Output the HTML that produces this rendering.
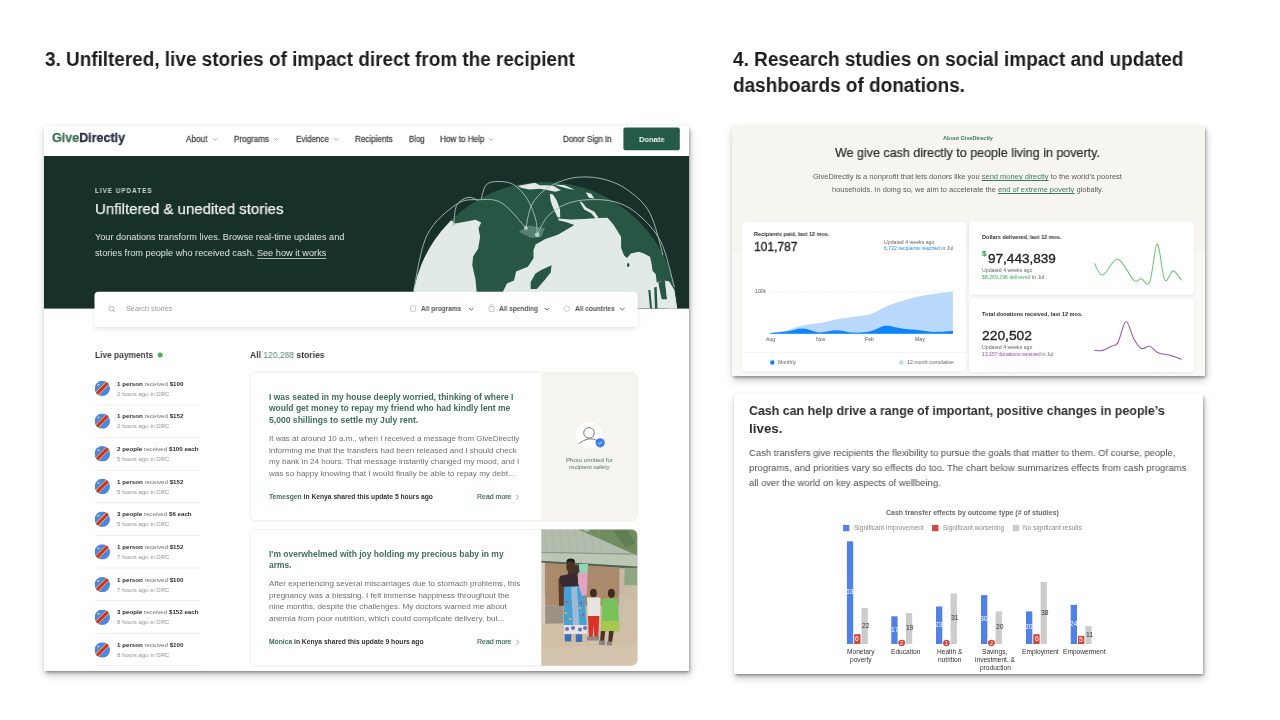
<!DOCTYPE html>
<html><head><meta charset="utf-8"><style>
html,body{margin:0;padding:0;width:1280px;height:720px;overflow:hidden;background:#fff;}
body{position:relative;font-family:"Liberation Sans",sans-serif;}
.t{position:absolute;white-space:nowrap;transform-origin:0 0;will-change:transform;}
.shot{position:absolute;background:#fff;}
svg.g{position:absolute;left:0;top:0;}
</style></head><body>

<div class="shot" style="left:44px;top:126px;width:645px;height:545px;box-shadow:0.5px 1.5px 3px rgba(0,0,0,0.38), 1px 4px 8px rgba(0,0,0,0.22);"></div>
<div class="shot" style="left:732px;top:126px;width:473px;height:250px;box-shadow:0.5px 1.5px 3px rgba(0,0,0,0.38), 1px 4px 8px rgba(0,0,0,0.22);"></div>
<div class="shot" style="left:734px;top:394px;width:469px;height:280px;box-shadow:0.5px 1.5px 3px rgba(0,0,0,0.38), 1px 4px 8px rgba(0,0,0,0.22);"></div>

<svg class="g" width="1280" height="720" viewBox="0 0 1280 720">
<rect x="44" y="126" width="645" height="30" fill="#fff"/><polyline points="212.8,138.20000000000002 215,140.4 217.2,138.20000000000002" fill="none" stroke="#9a9a9a" stroke-width="0.8"/><polyline points="274.3,138.20000000000002 276.5,140.4 278.7,138.20000000000002" fill="none" stroke="#9a9a9a" stroke-width="0.8"/><polyline points="334.3,138.20000000000002 336.5,140.4 338.7,138.20000000000002" fill="none" stroke="#9a9a9a" stroke-width="0.8"/><polyline points="488.8,138.20000000000002 491,140.4 493.2,138.20000000000002" fill="none" stroke="#9a9a9a" stroke-width="0.8"/><rect x="623.4" y="127.6" width="56.4" height="22.6" rx="2" fill="#245a47"/><rect x="44" y="156" width="645" height="152.6" fill="#17302a"/><defs><clipPath id="heroclip"><rect x="44" y="156" width="645" height="152.6"/></clipPath><clipPath id="globeclip"><circle cx="544.5" cy="315.0" r="133.0"/></clipPath></defs><g clip-path="url(#heroclip)"><circle cx="544.5" cy="315.0" r="133.0" fill="#275744"/><g clip-path="url(#globeclip)"><polygon points="389.4,306.1 389.4,199.2 452.6,220.9 454.0,223.7 469.2,220.9 475.4,219.8 481.2,222.5 478.5,228.3 480.1,237.1 478.1,248.7 473.1,256.5 472.3,265.3 475.4,278.9 478.1,306.1" fill="#e2eae7"/><polygon points="502.9,300.0 502.9,291.7 507.1,283.3 514.0,280.6 516.1,271.5 527.9,266.7 533.5,258.3 533.5,250.0 535.6,244.4 545.3,238.9 557.8,234.7 574.4,225.0 565.7,222.1 558.9,220.6 557.9,218.6 570.6,219.4 584.2,219.0 597.8,217.9 607.5,217.7 613.4,224.5 618.2,232.2 621.1,237.1 621.1,247.8 624.1,255.6 627.0,257.9 630.9,253.6 638.7,251.7 643.3,253.3 650.0,256.7 651.7,264.2 652.5,270.8 655.8,274.2 656.7,282.5 658.3,281.7 665.0,280.8 669.2,281.7 674.2,290.0 679.0,320.0" fill="#e2eae7"/><polygon points="530.7,288.9 530.7,281.9 535.6,273.6 541.1,270.1 551.5,265.3 550.8,272.2 545.3,279.2 536.9,288.9" fill="#275744"/><ellipse cx="628.2" cy="264.9" rx="1.3" ry="2" fill="#275744"/><polygon points="549.8,193.8 553.0,194.5 556.9,200.8 560.0,209.4 560.2,217.2 557.7,217.6 553.0,207.8 550.6,200.8" fill="#e2eae7"/><polygon points="553.8,184.4 564.7,185.2 574.8,189.8 569.4,189.1 558.4,185.9" fill="#e2eae7"/><polygon points="517.8,185.9 525.6,184.4 535.0,182.8 539.7,185.2 546.7,185.2 553.8,185.9 560.8,190.2 555.3,191.8 545.9,189.8 539.7,188.7 529.5,189.5 521.7,187.9" fill="#e2eae7"/><polygon points="585.8,192.2 591.2,193.8 594.4,198.4 588.9,197.7" fill="#e2eae7"/><polygon points="579.5,201.6 581.9,202.3 586.6,207.8 594.4,211.7 598.3,217.2 595.9,218.8 591.2,213.3 584.2,209.4" fill="#e2eae7"/><polygon points="648.3,290.0 650.4,290.0 652.1,309.0 650.0,309.0" fill="#275744"/><polygon points="654.2,287.5 656.7,286.7 657.5,309.0 655.0,309.0" fill="#275744"/><polygon points="658.3,281.7 665.0,280.8 667.1,299.2 661.7,299.2 659.2,287.5" fill="#275744"/><polygon points="665.0,280.8 669.2,281.7 674.2,290.0 677.5,312.0 667.5,312.0 667.1,299.2" fill="#e2eae7"/><polygon points="518.7,231.8 529.4,225.4 545.0,228.3 541.1,237.1 531.4,238.1" fill="#7fa394" opacity="0.55"/></g><path d="M413.6,290.4 C415.9,281.1 420.0,249.2 427.2,234.8 C434.4,220.5 448.0,210.1 456.7,204.2 C465.4,198.4 471.8,199.9 479.4,199.7 C486.9,199.5 494.3,198.4 502.0,203.1 C509.8,207.8 521.9,223.9 525.9,228.0" fill="none" stroke="#a9c4b9" stroke-width="0.95" opacity="0.95"/><path d="M453.7,224.6 C454.2,221.4 454.3,209.9 456.7,205.4 C459.1,200.8 464.4,198.2 468.0,197.4 C471.6,196.6 476.5,199.9 478.2,200.4" fill="none" stroke="#a9c4b9" stroke-width="0.95" opacity="0.95"/><path d="M481.2,199.0 C482.0,196.7 483.4,187.9 486.2,184.9 C488.9,182.0 493.0,181.6 497.5,181.5 C502.0,181.5 508.5,181.7 513.4,184.5 C518.3,187.3 523.3,192.8 527.0,198.5 C530.7,204.3 533.9,212.9 535.6,219.0 C537.3,225.0 536.9,232.2 537.2,234.8" fill="none" stroke="#a9c4b9" stroke-width="0.95" opacity="0.95"/><path d="M525.9,228.0 C526.8,224.2 528.3,211.8 531.5,205.4 C534.7,198.9 539.8,193.6 545.1,189.5 C550.4,185.3 557.2,182.5 563.3,180.4 C569.3,178.3 574.6,177.2 581.4,177.0 C588.2,176.8 596.5,177.2 604.1,179.3 C611.6,181.4 619.2,184.0 626.8,189.5 C634.3,195.0 643.4,201.2 649.4,212.2 C655.5,223.1 660.8,248.1 663.0,255.2" fill="none" stroke="#a9c4b9" stroke-width="0.95" opacity="0.95"/><path d="M537.2,234.8 C538.9,231.8 542.7,221.8 547.4,216.7 C552.1,211.6 558.7,207.1 565.5,204.2 C572.3,201.4 579.9,200.1 588.2,199.7 C596.5,199.3 607.1,199.5 615.4,202.0 C623.7,204.4 630.5,207.8 638.1,214.4 C645.7,221.0 654.7,229.5 660.8,241.6 C666.8,253.7 672.1,279.4 674.4,287.0" fill="none" stroke="#a9c4b9" stroke-width="0.95" opacity="0.95"/><circle cx="525.9" cy="228.0" r="1.9" fill="#b9cfc6"/><circle cx="537.2" cy="234.8" r="2.3" fill="#b9cfc6"/><circle cx="453.7" cy="224.6" r="1.5" fill="#b9cfc6"/></g><defs><filter id="sbsh" x="-10%" y="-50%" width="120%" height="200%"><feDropShadow dx="0" dy="2" stdDeviation="2.5" flood-color="#000" flood-opacity="0.10"/></filter></defs><rect x="94.5" y="291.7" width="543.1" height="35.2" rx="4" fill="#fff" filter="url(#sbsh)"/><circle cx="111.4" cy="308.6" r="2.4" fill="none" stroke="#9a9a9a" stroke-width="0.7"/><line x1="113.2" y1="310.4" x2="114.8" y2="312" stroke="#9a9a9a" stroke-width="0.7"/><polyline points="468.9,307.85 471.2,310.15 473.5,307.85" fill="none" stroke="#555" stroke-width="0.9"/><polyline points="544.5,307.85 546.8,310.15 549.0999999999999,307.85" fill="none" stroke="#555" stroke-width="0.9"/><polyline points="620.0,307.85 622.3,310.15 624.5999999999999,307.85" fill="none" stroke="#555" stroke-width="0.9"/><rect x="410.5" y="305.8" width="5.2" height="5.6" rx="1.2" fill="none" stroke="#aaa" stroke-width="0.6"/><rect x="489" y="306.5" width="5.2" height="5" rx="0.8" fill="none" stroke="#aaa" stroke-width="0.6"/><path d="M490.3,306.5 v-1 a1.3,1.3 0 0 1 2.6,0 v1" fill="none" stroke="#aaa" stroke-width="0.6"/><circle cx="566.7" cy="308.7" r="2.8" fill="none" stroke="#aaa" stroke-width="0.6"/><circle cx="160.1" cy="355.1" r="2.5" fill="#4caf50"/><defs><clipPath id="fl388"><circle cx="102.3" cy="388.4" r="7.7"/></clipPath></defs><g clip-path="url(#fl388)"><rect x="94.6" y="380.7" width="15.4" height="15.4" fill="#4a86e6"/><line x1="94.6" y1="396.09999999999997" x2="110.0" y2="380.7" stroke="#f2d84a" stroke-width="4.2"/><line x1="94.6" y1="396.09999999999997" x2="110.0" y2="380.7" stroke="#d42b2b" stroke-width="3.0"/><circle cx="98.5" cy="384.9" r="1.0" fill="#efd95a"/></g><rect x="94.5" y="404.7" width="106" height="0.6" fill="#e6e6e6"/><defs><clipPath id="fl421"><circle cx="102.3" cy="421.09999999999997" r="7.7"/></clipPath></defs><g clip-path="url(#fl421)"><rect x="94.6" y="413.4" width="15.4" height="15.4" fill="#4a86e6"/><line x1="94.6" y1="428.79999999999995" x2="110.0" y2="413.4" stroke="#f2d84a" stroke-width="4.2"/><line x1="94.6" y1="428.79999999999995" x2="110.0" y2="413.4" stroke="#d42b2b" stroke-width="3.0"/><circle cx="98.5" cy="417.59999999999997" r="1.0" fill="#efd95a"/></g><rect x="94.5" y="437.3" width="106" height="0.6" fill="#e6e6e6"/><defs><clipPath id="fl453"><circle cx="102.3" cy="453.79999999999995" r="7.7"/></clipPath></defs><g clip-path="url(#fl453)"><rect x="94.6" y="446.09999999999997" width="15.4" height="15.4" fill="#4a86e6"/><line x1="94.6" y1="461.49999999999994" x2="110.0" y2="446.09999999999997" stroke="#f2d84a" stroke-width="4.2"/><line x1="94.6" y1="461.49999999999994" x2="110.0" y2="446.09999999999997" stroke="#d42b2b" stroke-width="3.0"/><circle cx="98.5" cy="450.29999999999995" r="1.0" fill="#efd95a"/></g><rect x="94.5" y="469.9" width="106" height="0.6" fill="#e6e6e6"/><defs><clipPath id="fl486"><circle cx="102.3" cy="486.5" r="7.7"/></clipPath></defs><g clip-path="url(#fl486)"><rect x="94.6" y="478.8" width="15.4" height="15.4" fill="#4a86e6"/><line x1="94.6" y1="494.2" x2="110.0" y2="478.8" stroke="#f2d84a" stroke-width="4.2"/><line x1="94.6" y1="494.2" x2="110.0" y2="478.8" stroke="#d42b2b" stroke-width="3.0"/><circle cx="98.5" cy="483.0" r="1.0" fill="#efd95a"/></g><rect x="94.5" y="502.5" width="106" height="0.6" fill="#e6e6e6"/><defs><clipPath id="fl519"><circle cx="102.3" cy="519.2" r="7.7"/></clipPath></defs><g clip-path="url(#fl519)"><rect x="94.6" y="511.50000000000006" width="15.4" height="15.4" fill="#4a86e6"/><line x1="94.6" y1="526.9000000000001" x2="110.0" y2="511.50000000000006" stroke="#f2d84a" stroke-width="4.2"/><line x1="94.6" y1="526.9000000000001" x2="110.0" y2="511.50000000000006" stroke="#d42b2b" stroke-width="3.0"/><circle cx="98.5" cy="515.7" r="1.0" fill="#efd95a"/></g><rect x="94.5" y="535.1" width="106" height="0.6" fill="#e6e6e6"/><defs><clipPath id="fl551"><circle cx="102.3" cy="551.9" r="7.7"/></clipPath></defs><g clip-path="url(#fl551)"><rect x="94.6" y="544.1999999999999" width="15.4" height="15.4" fill="#4a86e6"/><line x1="94.6" y1="559.6" x2="110.0" y2="544.1999999999999" stroke="#f2d84a" stroke-width="4.2"/><line x1="94.6" y1="559.6" x2="110.0" y2="544.1999999999999" stroke="#d42b2b" stroke-width="3.0"/><circle cx="98.5" cy="548.4" r="1.0" fill="#efd95a"/></g><rect x="94.5" y="567.7" width="106" height="0.6" fill="#e6e6e6"/><defs><clipPath id="fl584"><circle cx="102.3" cy="584.6" r="7.7"/></clipPath></defs><g clip-path="url(#fl584)"><rect x="94.6" y="576.9" width="15.4" height="15.4" fill="#4a86e6"/><line x1="94.6" y1="592.3000000000001" x2="110.0" y2="576.9" stroke="#f2d84a" stroke-width="4.2"/><line x1="94.6" y1="592.3000000000001" x2="110.0" y2="576.9" stroke="#d42b2b" stroke-width="3.0"/><circle cx="98.5" cy="581.1" r="1.0" fill="#efd95a"/></g><rect x="94.5" y="600.3" width="106" height="0.6" fill="#e6e6e6"/><defs><clipPath id="fl617"><circle cx="102.3" cy="617.3" r="7.7"/></clipPath></defs><g clip-path="url(#fl617)"><rect x="94.6" y="609.5999999999999" width="15.4" height="15.4" fill="#4a86e6"/><line x1="94.6" y1="625.0" x2="110.0" y2="609.5999999999999" stroke="#f2d84a" stroke-width="4.2"/><line x1="94.6" y1="625.0" x2="110.0" y2="609.5999999999999" stroke="#d42b2b" stroke-width="3.0"/><circle cx="98.5" cy="613.8" r="1.0" fill="#efd95a"/></g><rect x="94.5" y="632.9" width="106" height="0.6" fill="#e6e6e6"/><defs><clipPath id="fl650"><circle cx="102.3" cy="650.0" r="7.7"/></clipPath></defs><g clip-path="url(#fl650)"><rect x="94.6" y="642.3" width="15.4" height="15.4" fill="#4a86e6"/><line x1="94.6" y1="657.7" x2="110.0" y2="642.3" stroke="#f2d84a" stroke-width="4.2"/><line x1="94.6" y1="657.7" x2="110.0" y2="642.3" stroke="#d42b2b" stroke-width="3.0"/><circle cx="98.5" cy="646.5" r="1.0" fill="#efd95a"/></g><rect x="94.5" y="665.5" width="106" height="0.6" fill="#e6e6e6"/><rect x="249.8" y="372.2" width="387.6" height="148.8" rx="6" fill="#fff" stroke="#e9e9e9" stroke-width="0.8"/><rect x="249.8" y="529.4" width="387.6" height="136.39999999999998" rx="6" fill="#fff" stroke="#e9e9e9" stroke-width="0.8"/><defs><clipPath id="c1img"><path d="M540.8,372.2 H631.4 A6,6 0 0 1 637.4,378.2 V515 A6,6 0 0 1 631.4,521 H540.8 Z"/></clipPath></defs><rect x="540.8" y="372.2" width="97" height="149" fill="#f5f4ef" clip-path="url(#c1img)"/><polyline points="516.3,494.8 518.6,497.3 516.3,499.8" fill="none" stroke="#5b8a76" stroke-width="0.7"/><circle cx="589.1" cy="435.2" r="13.2" fill="#fff"/><circle cx="589" cy="432.9" r="5.3" fill="none" stroke="#6a6a6a" stroke-width="0.9"/><path d="M578.6,443.8 Q589,435.5 597.5,440.8" fill="none" stroke="#6a6a6a" stroke-width="0.9"/><circle cx="600.2" cy="442.8" r="4.6" fill="#3b7cf0"/><polyline points="598.2,442.9 599.6,444.2 602.2,441.4" fill="none" stroke="#fff" stroke-width="0.8"/><polyline points="516.5,639.8 518.8,642.3 516.5,644.8" fill="none" stroke="#5b8a76" stroke-width="0.7"/><defs><clipPath id="ph"><path d="M541.3,529.4 H631.4 A6,6 0 0 1 637.4,535.4 V659.8 A6,6 0 0 1 631.4,665.8 H541.3 Z"/></clipPath><filter id="blur1" x="-5%" y="-5%" width="110%" height="110%"><feGaussianBlur stdDeviation="0.6"/></filter></defs><g clip-path="url(#ph)"><g filter="url(#blur1)"><rect x="538" y="526" width="102" height="143" fill="#cfbea8"/><polygon points="540.0,528.0 637.2,528.0 637.2,568.8 540.0,568.8" fill="#6f8c60" /><polygon points="582.8,528.0 590.5,528.0 588.6,531.9 584.7,531.4" fill="#a9b8a4" /><polygon points="613.9,530.9 627.5,529.9 635.2,543.5 625.5,547.4" fill="#5f7f52" /><polygon points="540.0,528.0 575.0,528.0 633.8,554.0 540.0,552.5" fill="#b2bdae" /><line x1="543.9" y1="528.5" x2="546.8" y2="552.3" stroke="#9faa9c" stroke-width="0.4"/><line x1="551.7" y1="528.5" x2="554.6" y2="552.3" stroke="#9faa9c" stroke-width="0.4"/><line x1="559.4" y1="528.5" x2="562.4" y2="552.3" stroke="#9faa9c" stroke-width="0.4"/><line x1="567.2" y1="528.5" x2="570.1" y2="552.3" stroke="#9faa9c" stroke-width="0.4"/><line x1="575.0" y1="528.5" x2="577.9" y2="552.3" stroke="#9faa9c" stroke-width="0.4"/><line x1="582.8" y1="528.5" x2="585.7" y2="552.3" stroke="#9faa9c" stroke-width="0.4"/><line x1="590.5" y1="528.5" x2="593.4" y2="552.3" stroke="#9faa9c" stroke-width="0.4"/><line x1="598.3" y1="528.5" x2="601.2" y2="552.3" stroke="#9faa9c" stroke-width="0.4"/><polygon points="540.0,552.3 633.8,554.0 637.2,555.7 637.2,567.4 540.0,561.8" fill="#bcc6b5" /><polygon points="540.0,551.8 633.8,553.5 633.8,554.7 540.0,553.1" fill="#8e9a8a" /><polygon points="540.0,560.8 637.2,566.4 637.2,568.6 540.0,563.0" fill="#4e5e54" /><polygon points="540.0,562.5 619.7,567.4 619.2,605.7 540.0,605.7" fill="#a98a6b" /><polygon points="540.0,562.5 544.9,562.8 544.9,605.7 540.0,605.7" fill="#d2cbc0" /><polygon points="573.0,564.9 582.8,565.4 582.8,573.7 573.0,573.7" fill="#3e3632" /><polygon points="623.6,567.8 637.2,567.8 637.2,586.3 623.6,586.3" fill="#8fa682" /><polygon points="623.6,585.3 637.2,585.3 637.2,598.0 623.6,598.0" fill="#cdbca5" /><polygon points="545.0,606.0 563.5,606.0 563.5,624.5 545.0,624.5" fill="#9c9184" /><polygon points="541.5,595.0 545.2,595.0 545.2,625.0 541.5,625.0" fill="#d3ccc1" /><polygon points="540.0,624.0 640.0,621.0 640.0,668.0 540.0,668.0" fill="#d0bea7" /><polygon points="540.0,648.0 640.0,644.0 640.0,668.0 540.0,668.0" fill="#d4c3ad" /><polygon points="619.7,568.3 624.7,568.3 623.8,598.0 619.9,598.0" fill="#c6b9a6" /><polygon points="618.8,595.5 623.0,595.5 621.5,629.0 618.6,629.0" fill="#c9bdae" /><ellipse cx="570.7" cy="561.8" rx="4.2" ry="3.2" fill="#1f1a18"/><ellipse cx="570.6" cy="566.7" rx="4.4" ry="5.4" fill="#4b3223"/><polygon points="567.7,570.8 574.0,570.8 573.5,574.6 568.2,574.6" fill="#4b3223" /><polygon points="558.5,578.5 563.8,576.6 563.8,605.7 559.0,605.7" fill="#5a3a2a" /><polygon points="559.9,576.1 576.9,572.2 578.9,586.3 564.3,588.1 559.4,582.4" fill="#372a30" /><polygon points="564.1,586.8 583.9,586.1 587.2,633.0 564.0,633.0" fill="#45a0d6" /><polygon points="571.1,587.3 576.9,586.8 579.5,626.0 573.0,626.0" fill="#e6d2d8" opacity="0.55"/><circle cx="567.0" cy="602.0" r="1.3" fill="#d44a5a" opacity="0.8"/><circle cx="581.0" cy="603.0" r="1.3" fill="#d44a5a" opacity="0.8"/><circle cx="566.0" cy="613.0" r="1.3" fill="#e0c040" opacity="0.8"/><circle cx="583.0" cy="615.0" r="1.3" fill="#d44a5a" opacity="0.8"/><circle cx="570.0" cy="619.0" r="1.3" fill="#e0c040" opacity="0.8"/><circle cx="580.0" cy="608.0" r="1.3" fill="#e0c040" opacity="0.8"/><polygon points="564.0,625.0 587.2,625.0 587.2,633.8 564.0,633.8" fill="#e9e2e8" /><circle cx="567.0" cy="629.0" r="2" fill="#3c4fa0" opacity="0.75"/><circle cx="573.0" cy="628.0" r="2" fill="#3c4fa0" opacity="0.75"/><circle cx="580.0" cy="629.5" r="2" fill="#3c4fa0" opacity="0.75"/><circle cx="585.0" cy="628.0" r="2" fill="#3c4fa0" opacity="0.75"/><polygon points="564.8,634.2 571.2,634.2 571.2,641.5 564.8,641.5" fill="#3b6fb8" /><polygon points="575.8,634.2 582.2,634.2 582.2,642.0 575.8,642.0" fill="#3b6fb8" /><polygon points="578.4,572.2 587.6,572.2 586.8,595.1 582.0,596.0 577.9,582.4" fill="#e2a4c4" /><polygon points="578.9,564.0 588.1,564.0 587.6,572.7 579.4,572.7" fill="#92d6b4" /><ellipse cx="593.4" cy="593.1" rx="3.4" ry="4.4" fill="#3f2a20"/><polygon points="587.0,597.5 600.5,597.5 600.0,616.5 588.0,616.5" fill="#e9e3dd" /><polygon points="588.0,616.0 599.2,616.0 598.2,637.2 594.5,637.2 593.5,624.5 592.7,637.2 589.0,637.2" fill="#d9302b" /><polygon points="587.0,636.5 599.0,636.5 599.0,640.5 587.0,640.5" fill="#8f8a88" /><ellipse cx="611.4" cy="593.3" rx="3.5" ry="4.5" fill="#3f2a20"/><polygon points="602.2,598.5 618.0,598.5 619.2,631.0 601.2,631.0" fill="#79c25a" /><polygon points="601.2,621.0 619.2,621.0 619.2,631.5 601.2,631.5" fill="#a6c84e" /><polygon points="600.8,631.0 605.2,631.0 604.0,643.0 600.0,643.0" fill="#4a3628" /><polygon points="609.0,631.0 613.8,631.0 611.8,644.0 608.0,644.0" fill="#4a3628" /><polygon points="599.0,640.5 605.0,640.5 605.0,645.0 599.0,645.0" fill="#8a8582" /><polygon points="606.8,641.5 612.0,641.5 612.0,645.5 606.8,645.5" fill="#8a8582" /></g></g><rect x="732" y="126" width="473" height="127" fill="#f6f5f0"/><rect x="732" y="253" width="473" height="123" fill="#f9f9f8"/><defs><filter id="cardsh" x="-5%" y="-5%" width="110%" height="115%"><feDropShadow dx="0" dy="0.6" stdDeviation="0.8" flood-color="#000" flood-opacity="0.10"/></filter></defs><rect x="741.8" y="222" width="224.2" height="149.5" rx="3.5" fill="#fff" filter="url(#cardsh)"/><rect x="969.1" y="221.6" width="225" height="73.1" rx="3.5" fill="#fff" filter="url(#cardsh)"/><rect x="969.1" y="298.4" width="225" height="73.6" rx="3.5" fill="#fff" filter="url(#cardsh)"/><line x1="770.9" y1="291.9" x2="952.9" y2="291.9" stroke="#cfcfcf" stroke-width="0.6" stroke-dasharray="1,2"/><path d="M770.2,333.3 C773.2,332.7 783.1,331.0 788.5,329.7 C794.0,328.3 797.5,326.3 802.9,325.2 C808.3,324.1 814.9,324.0 820.9,323.0 C826.9,322.0 831.3,320.3 838.8,319.1 C846.3,317.8 859.8,316.4 865.8,315.3 C871.8,314.1 871.2,313.8 874.8,312.2 C878.4,310.7 882.9,307.8 887.3,305.9 C891.8,304.1 896.3,302.5 901.7,300.9 C907.1,299.3 913.7,297.5 919.7,296.2 C925.7,295.0 932.1,294.2 937.7,293.4 C943.2,292.5 950.4,291.6 952.9,291.2 L952.9,333.8 L770.2,333.8 Z" fill="#bad8fb"/><path d="M770.2,332.9 C772.9,332.7 781.3,332.4 786.7,331.6 C792.2,330.9 797.5,328.5 802.9,328.6 C808.3,328.7 813.4,332.1 819.1,332.4 C824.8,332.6 831.6,330.2 837.0,330.2 C842.4,330.2 846.0,332.3 851.4,332.5 C856.8,332.8 863.7,332.8 869.4,331.6 C875.1,330.5 880.2,326.2 885.6,325.7 C890.9,325.2 896.0,327.7 901.7,328.4 C907.4,329.1 914.3,329.6 919.7,330.2 C925.1,330.8 928.5,331.8 934.1,332.0 C939.6,332.1 949.8,331.2 952.9,331.1 L952.9,333.8 L770.2,333.8 Z" fill="#0a84ff"/><rect x="741.8" y="352.2" width="224.2" height="0.5" fill="#ececec"/><circle cx="772.3" cy="362.5" r="2.2" fill="#0a84ff"/><circle cx="901.4" cy="362.5" r="2.2" fill="#bad8fb"/><path d="M1094.4,263.4 C1095.8,265.3 1098.9,275.7 1102.8,275.0 C1106.7,274.3 1112.7,258.2 1117.8,259.1 C1123.0,259.9 1129.9,277.0 1133.8,280.3 C1137.7,283.5 1138.6,278.4 1141.3,278.8 C1143.9,279.1 1147.0,287.9 1149.7,282.1 C1152.4,276.3 1154.7,244.5 1157.2,244.1 C1159.7,243.7 1162.0,275.2 1164.7,279.7 C1167.4,284.2 1170.3,270.8 1173.1,270.9 C1176.0,271.0 1180.2,278.7 1181.6,280.3" fill="none" stroke="#6cc77f" stroke-width="1.1"/><path d="M1094.4,350.4 C1095.8,350.4 1100.0,351.1 1102.8,350.4 C1105.6,349.7 1108.8,347.5 1111.3,346.3 C1113.8,345.0 1115.4,347.0 1117.8,342.9 C1120.3,338.8 1123.2,322.2 1125.9,321.5 C1128.5,320.8 1131.2,334.3 1133.8,338.8 C1136.3,343.3 1138.6,347.3 1141.3,348.5 C1143.9,349.8 1146.9,345.5 1149.7,346.3 C1152.5,347.0 1154.5,351.3 1158.1,352.8 C1161.7,354.4 1167.4,354.5 1171.3,355.6 C1175.2,356.7 1179.9,358.8 1181.6,359.4" fill="none" stroke="#9b59b6" stroke-width="1.1"/><rect x="843.1" y="524.9" width="6.3" height="6.3" fill="#4f81e8"/><rect x="932.1" y="524.9" width="6.3" height="6.3" fill="#d2473c"/><rect x="1012.8" y="524.9" width="6.3" height="6.3" fill="#cccccc"/><rect x="846.9" y="541.3" width="6.3" height="102.7" fill="#4f81e8"/><rect x="854.2" y="634.2" width="6.3" height="9.8" fill="#d2473c"/><rect x="861.5" y="608.1" width="6.3" height="35.9" fill="#cccccc"/><rect x="891.3" y="616.3" width="6.3" height="27.7" fill="#4f81e8"/><rect x="898.6" y="640.7" width="6.3" height="3.3" fill="#d2473c"/><rect x="905.9" y="613.0" width="6.3" height="31.0" fill="#cccccc"/><circle cx="901.7" cy="643.0" r="3.2" fill="#d2473c"/><rect x="936.0" y="606.5" width="6.3" height="37.5" fill="#4f81e8"/><rect x="943.3" y="642.4" width="6.3" height="1.6" fill="#d2473c"/><rect x="950.6" y="593.5" width="6.3" height="50.5" fill="#cccccc"/><circle cx="946.4" cy="643.0" r="3.2" fill="#d2473c"/><rect x="981.0" y="595.1" width="6.3" height="48.9" fill="#4f81e8"/><rect x="988.3" y="640.7" width="6.3" height="3.3" fill="#d2473c"/><rect x="995.6" y="611.4" width="6.3" height="32.6" fill="#cccccc"/><circle cx="991.4" cy="643.0" r="3.2" fill="#d2473c"/><rect x="1026.0" y="611.4" width="6.3" height="32.6" fill="#4f81e8"/><rect x="1033.3" y="634.2" width="6.3" height="9.8" fill="#d2473c"/><rect x="1040.6" y="582.1" width="6.3" height="61.9" fill="#cccccc"/><rect x="1070.7" y="604.9" width="6.3" height="39.1" fill="#4f81e8"/><rect x="1078.0" y="635.9" width="6.3" height="8.1" fill="#d2473c"/><rect x="1085.3" y="626.1" width="6.3" height="17.9" fill="#cccccc"/>
</svg>
<div class="t" style="left:45.00px;top:50.21px;font-size:19.6px;line-height:19.6px;transform:scaleX(0.9655);"><span style="font-weight:700;color:#1d1d1d;">3. Unfiltered, live stories of impact direct from the recipient</span></div><div class="t" style="left:732.50px;top:50.41px;font-size:19.6px;line-height:19.6px;transform:scaleX(0.9686);"><span style="font-weight:700;color:#1d1d1d;">4. Research studies on social impact and updated</span></div><div class="t" style="left:732.50px;top:76.41px;font-size:19.6px;line-height:19.6px;transform:scaleX(0.9684);"><span style="font-weight:700;color:#1d1d1d;">dashboards of donations.</span></div><div class="t" style="left:51.50px;top:131.40px;font-size:13px;line-height:13px;transform:scaleX(0.9621);"><span style="font-weight:700;color:#3c7050;-webkit-text-stroke:0.3px #3c7050;">Give</span><span style="font-weight:700;color:#272c45;-webkit-text-stroke:0.3px #272c45;">Directly</span></div><div class="t" style="left:186.00px;top:135.27px;font-size:8.3px;line-height:8.3px;transform:scaleX(0.9820);-webkit-text-stroke:0.3px #4a4a4a;"><span style="font-weight:400;color:#505050;">About</span></div><div class="t" style="left:233.80px;top:135.27px;font-size:8.3px;line-height:8.3px;transform:scaleX(0.9756);-webkit-text-stroke:0.3px #4a4a4a;"><span style="font-weight:400;color:#505050;">Programs</span></div><div class="t" style="left:295.80px;top:135.27px;font-size:8.3px;line-height:8.3px;transform:scaleX(0.9606);-webkit-text-stroke:0.3px #4a4a4a;"><span style="font-weight:400;color:#505050;">Evidence</span></div><div class="t" style="left:355.30px;top:135.27px;font-size:8.3px;line-height:8.3px;transform:scaleX(0.9728);-webkit-text-stroke:0.3px #4a4a4a;"><span style="font-weight:400;color:#505050;">Recipients</span></div><div class="t" style="left:408.50px;top:135.27px;font-size:8.3px;line-height:8.3px;transform:scaleX(0.9330);-webkit-text-stroke:0.3px #4a4a4a;"><span style="font-weight:400;color:#505050;">Blog</span></div><div class="t" style="left:439.50px;top:135.27px;font-size:8.3px;line-height:8.3px;transform:scaleX(0.9843);-webkit-text-stroke:0.3px #4a4a4a;"><span style="font-weight:400;color:#505050;">How to Help</span></div><div class="t" style="left:563.30px;top:135.27px;font-size:8.3px;line-height:8.3px;transform:scaleX(0.9595);-webkit-text-stroke:0.3px #4a4a4a;"><span style="font-weight:400;color:#505050;">Donor Sign In</span></div><div class="t" style="left:638.85px;top:135.83px;font-size:8px;line-height:8px;transform:scaleX(0.9405);"><span style="font-weight:700;color:#eef3f0;">Donate</span></div><div class="t" style="left:94.50px;top:188.20px;font-size:6.5px;line-height:6.5px;letter-spacing:1.0px;transform:scaleX(0.9774);"><span style="font-weight:700;color:#cfd8d3;">LIVE UPDATES</span></div><div class="t" style="left:94.50px;top:201.08px;font-size:15.5px;line-height:15.5px;transform:scaleX(0.9680);-webkit-text-stroke:0.25px #f3f5f4;"><span style="font-weight:400;color:#f3f5f4;">Unfiltered &amp; unedited stories</span></div><div class="t" style="left:94.50px;top:232.72px;font-size:8.6px;line-height:8.6px;transform:scaleX(1.0644);"><span style="font-weight:400;color:#dde4e0;">Your donations transform lives. Browse real-time updates and</span></div><div class="t" style="left:94.50px;top:248.82px;font-size:8.6px;line-height:8.6px;transform:scaleX(1.0691);"><span style="font-weight:400;color:#dde4e0;">stories from people who received cash. </span><span style="font-weight:400;color:#dde4e0;text-decoration:underline;text-underline-offset:1.5px;text-decoration-thickness:0.5px;text-decoration-color:rgba(220,228,224,0.75);">See how it works</span></div><div class="t" style="left:126.20px;top:305.27px;font-size:7px;line-height:7px;transform:scaleX(1.0370);"><span style="font-weight:400;color:#9a9a9a;">Search stories</span></div><div class="t" style="left:421.00px;top:305.27px;font-size:7px;line-height:7px;transform:scaleX(0.9311);"><span style="font-weight:700;color:#555;">All programs</span></div><div class="t" style="left:499.30px;top:305.27px;font-size:7px;line-height:7px;transform:scaleX(0.9286);"><span style="font-weight:700;color:#555;">All spending</span></div><div class="t" style="left:574.60px;top:305.27px;font-size:7px;line-height:7px;transform:scaleX(0.9364);"><span style="font-weight:700;color:#555;">All countries</span></div><div class="t" style="left:94.80px;top:350.64px;font-size:8.7px;line-height:8.7px;transform:scaleX(0.9629);"><span style="font-weight:700;color:#3a3a3a;">Live payments</span></div><div class="t" style="left:250.00px;top:350.94px;font-size:8.7px;line-height:8.7px;transform:scaleX(0.9812);"><span style="font-weight:700;color:#3a3a3a;">All </span><span style="font-weight:400;color:#4f8a70;">120,288</span><span style="font-weight:700;color:#3a3a3a;"> stories</span></div><div class="t" style="left:117.30px;top:380.55px;font-size:6.2px;line-height:6.2px;"><span style="font-weight:700;color:#2e2e2e;">1 person</span><span style="font-weight:400;color:#6f6f6f;"> received </span><span style="font-weight:700;color:#2e2e2e;">$100</span></div><div class="t" style="left:117.30px;top:390.55px;font-size:6.2px;line-height:6.2px;transform:scaleX(0.9623);"><span style="font-weight:400;color:#8f8f8f;">2 hours ago in DRC</span></div><div class="t" style="left:117.30px;top:413.25px;font-size:6.2px;line-height:6.2px;"><span style="font-weight:700;color:#2e2e2e;">1 person</span><span style="font-weight:400;color:#6f6f6f;"> received </span><span style="font-weight:700;color:#2e2e2e;">$152</span></div><div class="t" style="left:117.30px;top:423.25px;font-size:6.2px;line-height:6.2px;transform:scaleX(0.9623);"><span style="font-weight:400;color:#8f8f8f;">2 hours ago in DRC</span></div><div class="t" style="left:117.30px;top:445.95px;font-size:6.2px;line-height:6.2px;"><span style="font-weight:700;color:#2e2e2e;">2 people</span><span style="font-weight:400;color:#6f6f6f;"> received </span><span style="font-weight:700;color:#2e2e2e;">$100 each</span></div><div class="t" style="left:117.30px;top:455.95px;font-size:6.2px;line-height:6.2px;transform:scaleX(0.9623);"><span style="font-weight:400;color:#8f8f8f;">5 hours ago in DRC</span></div><div class="t" style="left:117.30px;top:478.65px;font-size:6.2px;line-height:6.2px;"><span style="font-weight:700;color:#2e2e2e;">1 person</span><span style="font-weight:400;color:#6f6f6f;"> received </span><span style="font-weight:700;color:#2e2e2e;">$152</span></div><div class="t" style="left:117.30px;top:488.65px;font-size:6.2px;line-height:6.2px;transform:scaleX(0.9623);"><span style="font-weight:400;color:#8f8f8f;">5 hours ago in DRC</span></div><div class="t" style="left:117.30px;top:511.35px;font-size:6.2px;line-height:6.2px;"><span style="font-weight:700;color:#2e2e2e;">3 people</span><span style="font-weight:400;color:#6f6f6f;"> received </span><span style="font-weight:700;color:#2e2e2e;">$6 each</span></div><div class="t" style="left:117.30px;top:521.35px;font-size:6.2px;line-height:6.2px;transform:scaleX(0.9623);"><span style="font-weight:400;color:#8f8f8f;">5 hours ago in DRC</span></div><div class="t" style="left:117.30px;top:544.05px;font-size:6.2px;line-height:6.2px;"><span style="font-weight:700;color:#2e2e2e;">1 person</span><span style="font-weight:400;color:#6f6f6f;"> received </span><span style="font-weight:700;color:#2e2e2e;">$152</span></div><div class="t" style="left:117.30px;top:554.05px;font-size:6.2px;line-height:6.2px;transform:scaleX(0.9623);"><span style="font-weight:400;color:#8f8f8f;">7 hours ago in DRC</span></div><div class="t" style="left:117.30px;top:576.75px;font-size:6.2px;line-height:6.2px;"><span style="font-weight:700;color:#2e2e2e;">1 person</span><span style="font-weight:400;color:#6f6f6f;"> received </span><span style="font-weight:700;color:#2e2e2e;">$100</span></div><div class="t" style="left:117.30px;top:586.75px;font-size:6.2px;line-height:6.2px;transform:scaleX(0.9623);"><span style="font-weight:400;color:#8f8f8f;">7 hours ago in DRC</span></div><div class="t" style="left:117.30px;top:609.45px;font-size:6.2px;line-height:6.2px;"><span style="font-weight:700;color:#2e2e2e;">3 people</span><span style="font-weight:400;color:#6f6f6f;"> received </span><span style="font-weight:700;color:#2e2e2e;">$152 each</span></div><div class="t" style="left:117.30px;top:619.45px;font-size:6.2px;line-height:6.2px;transform:scaleX(0.9623);"><span style="font-weight:400;color:#8f8f8f;">8 hours ago in DRC</span></div><div class="t" style="left:117.30px;top:642.15px;font-size:6.2px;line-height:6.2px;"><span style="font-weight:700;color:#2e2e2e;">1 person</span><span style="font-weight:400;color:#6f6f6f;"> received </span><span style="font-weight:700;color:#2e2e2e;">$100</span></div><div class="t" style="left:117.30px;top:652.15px;font-size:6.2px;line-height:6.2px;transform:scaleX(0.9623);"><span style="font-weight:400;color:#8f8f8f;">8 hours ago in DRC</span></div><div class="t" style="left:269.00px;top:393.09px;font-size:8.4px;line-height:8.4px;transform:scaleX(1.0161);"><span style="font-weight:700;color:#3f6f5a;">I was seated in my house deeply worried, thinking of where I</span></div><div class="t" style="left:269.00px;top:404.39px;font-size:8.4px;line-height:8.4px;transform:scaleX(1.0147);"><span style="font-weight:700;color:#3f6f5a;">would get money to repay my friend who had kindly lent me</span></div><div class="t" style="left:269.00px;top:415.69px;font-size:8.4px;line-height:8.4px;transform:scaleX(1.0245);"><span style="font-weight:700;color:#3f6f5a;">5,000 shillings to settle my July rent.</span></div><div class="t" style="left:268.70px;top:434.60px;font-size:7.8px;line-height:7.8px;transform:scaleX(1.0219);"><span style="font-weight:400;color:#6f6f6f;">It was at around 10 a.m., when I received a message from GiveDirectly</span></div><div class="t" style="left:268.70px;top:446.80px;font-size:7.8px;line-height:7.8px;transform:scaleX(1.0343);"><span style="font-weight:400;color:#6f6f6f;">informing me that the transfers had been released and I should check</span></div><div class="t" style="left:268.70px;top:457.50px;font-size:7.8px;line-height:7.8px;transform:scaleX(1.0315);"><span style="font-weight:400;color:#6f6f6f;">my bank in 24 hours. That message instantly changed my mood, and I</span></div><div class="t" style="left:268.70px;top:469.60px;font-size:7.8px;line-height:7.8px;transform:scaleX(1.0360);"><span style="font-weight:400;color:#6f6f6f;">was so happy knowing that I would finally be able to repay my debt...</span></div><div class="t" style="left:268.70px;top:494.41px;font-size:6.6px;line-height:6.6px;transform:scaleX(1.0177);"><span style="font-weight:700;color:#3f6f5a;">Temesgen</span><span style="font-weight:700;color:#333;"> in Kenya shared this update 5 hours ago</span></div><div class="t" style="left:476.90px;top:494.24px;font-size:6.8px;line-height:6.8px;transform:scaleX(1.0256);-webkit-text-stroke:0.2px #3f6f5a;"><span style="font-weight:400;color:#3f6f5a;">Read more</span></div><div class="t" style="left:565.70px;top:457.04px;font-size:6.1px;line-height:6.1px;transform:scaleX(1.0118);"><span style="font-weight:400;color:#4f7d69;">Photo omitted for</span></div><div class="t" style="left:568.95px;top:464.44px;font-size:6.1px;line-height:6.1px;transform:scaleX(0.9872);"><span style="font-weight:400;color:#4f7d69;">recipient safety</span></div><div class="t" style="left:269.00px;top:549.89px;font-size:8.4px;line-height:8.4px;transform:scaleX(1.0138);"><span style="font-weight:700;color:#3f6f5a;">I&#x27;m overwhelmed with joy holding my precious baby in my</span></div><div class="t" style="left:269.00px;top:561.09px;font-size:8.4px;line-height:8.4px;transform:scaleX(1.0038);"><span style="font-weight:700;color:#3f6f5a;">arms.</span></div><div class="t" style="left:268.70px;top:579.70px;font-size:7.8px;line-height:7.8px;transform:scaleX(1.0351);"><span style="font-weight:400;color:#6f6f6f;">After experiencing several miscarriages due to stomach problems, this</span></div><div class="t" style="left:268.70px;top:591.70px;font-size:7.8px;line-height:7.8px;transform:scaleX(1.0320);"><span style="font-weight:400;color:#6f6f6f;">pregnancy was a blessing. I felt immense happiness throughout the</span></div><div class="t" style="left:268.70px;top:602.70px;font-size:7.8px;line-height:7.8px;transform:scaleX(1.0372);"><span style="font-weight:400;color:#6f6f6f;">nine months, despite the challenges. My doctors warned me about</span></div><div class="t" style="left:268.70px;top:614.60px;font-size:7.8px;line-height:7.8px;transform:scaleX(1.0437);"><span style="font-weight:400;color:#6f6f6f;">anemia from poor nutrition, which could complicate delivery, but...</span></div><div class="t" style="left:268.70px;top:639.41px;font-size:6.6px;line-height:6.6px;transform:scaleX(1.0189);"><span style="font-weight:700;color:#3f6f5a;">Monica</span><span style="font-weight:700;color:#333;"> in Kenya shared this update 9 hours ago</span></div><div class="t" style="left:477.20px;top:639.24px;font-size:6.8px;line-height:6.8px;transform:scaleX(1.0256);-webkit-text-stroke:0.2px #3f6f5a;"><span style="font-weight:400;color:#3f6f5a;">Read more</span></div><div class="t" style="left:942.80px;top:136.35px;font-size:5.2px;line-height:5.2px;transform:scaleX(1.0681);"><span style="font-weight:700;color:#3b7a5c;">About GiveDirectly</span></div><div class="t" style="left:835.40px;top:146.96px;font-size:12.8px;line-height:12.8px;transform:scaleX(0.9764);-webkit-text-stroke:0.2px #2b2b2b;"><span style="font-weight:400;color:#2b2b2b;">We give cash directly to people living in poverty.</span></div><div class="t" style="left:813.00px;top:173.81px;font-size:6.6px;line-height:6.6px;transform:scaleX(1.1395);"><span style="font-weight:400;color:#595959;">GiveDirectly is a nonprofit that lets donors like you </span><span style="font-weight:400;color:#3d7a5e;text-decoration:underline;text-decoration-thickness:0.5px;text-underline-offset:1px;">send money directly</span><span style="font-weight:400;color:#595959;"> to the world’s poorest</span></div><div class="t" style="left:831.90px;top:186.61px;font-size:6.6px;line-height:6.6px;transform:scaleX(1.1321);"><span style="font-weight:400;color:#595959;">households. In doing so, we aim to accelerate the </span><span style="font-weight:400;color:#3d7a5e;text-decoration:underline;text-decoration-thickness:0.5px;text-underline-offset:1px;">end of extreme poverty</span><span style="font-weight:400;color:#595959;"> globally.</span></div><div class="t" style="left:754.40px;top:231.86px;font-size:5.6px;line-height:5.6px;transform:scaleX(0.9875);"><span style="font-weight:700;color:#2f2f2f;">Recipients paid, last 12 mos.</span></div><div class="t" style="left:754.40px;top:239.70px;font-size:13px;line-height:13px;transform:scaleX(0.9257);-webkit-text-stroke:0.35px #262626;"><span style="font-weight:400;color:#262626;">101,787</span></div><div class="t" style="left:883.80px;top:240.30px;font-size:5.2px;line-height:5.2px;transform:scaleX(1.0039);"><span style="font-weight:400;color:#666;">Updated 4 weeks ago</span></div><div class="t" style="left:883.80px;top:245.90px;font-size:5.2px;line-height:5.2px;transform:scaleX(0.9853);"><span style="font-weight:400;color:#2f86f0;">6,722 recipients reached</span><span style="font-weight:400;color:#666;"> in Jul</span></div><div class="t" style="left:755.30px;top:289.40px;font-size:5.2px;line-height:5.2px;transform:scaleX(0.9578);"><span style="font-weight:400;color:#555;">100k</span></div><div class="t" style="left:765.69px;top:337.20px;font-size:5.2px;line-height:5.2px;transform:scaleX(0.9727);"><span style="font-weight:400;color:#555;">Aug</span></div><div class="t" style="left:815.57px;top:337.20px;font-size:5.2px;line-height:5.2px;transform:scaleX(1.0273);"><span style="font-weight:400;color:#555;">Nov</span></div><div class="t" style="left:864.88px;top:337.20px;font-size:5.2px;line-height:5.2px;transform:scaleX(1.0044);"><span style="font-weight:400;color:#555;">Feb</span></div><div class="t" style="left:914.59px;top:337.20px;font-size:5.2px;line-height:5.2px;transform:scaleX(0.9670);"><span style="font-weight:400;color:#555;">May</span></div><div class="t" style="left:778.00px;top:359.90px;font-size:5.2px;line-height:5.2px;transform:scaleX(0.9886);"><span style="font-weight:400;color:#666;">Monthly</span></div><div class="t" style="left:907.00px;top:359.90px;font-size:5.2px;line-height:5.2px;transform:scaleX(0.9691);"><span style="font-weight:400;color:#666;">12 month cumulative</span></div><div class="t" style="left:981.90px;top:234.96px;font-size:5.6px;line-height:5.6px;transform:scaleX(0.9925);"><span style="font-weight:700;color:#2f2f2f;">Dollars delivered, last 12 mos.</span></div><div class="t" style="left:981.60px;top:250.43px;font-size:8px;line-height:8px;-webkit-text-stroke:0.3px #34a853;"><span style="font-weight:400;color:#34a853;">$</span></div><div class="t" style="left:988.40px;top:252.40px;font-size:13px;line-height:13px;transform:scaleX(1.0436);-webkit-text-stroke:0.35px #262626;"><span style="font-weight:400;color:#262626;">97,443,839</span></div><div class="t" style="left:981.90px;top:268.40px;font-size:5.2px;line-height:5.2px;transform:scaleX(1.0039);"><span style="font-weight:400;color:#666;">Updated 4 weeks ago</span></div><div class="t" style="left:981.90px;top:274.70px;font-size:5.2px;line-height:5.2px;"><span style="font-weight:400;color:#3cb35a;">$8,269,296 delivered</span><span style="font-weight:400;color:#666;"> in Jul</span></div><div class="t" style="left:981.90px;top:311.86px;font-size:5.6px;line-height:5.6px;transform:scaleX(0.9958);"><span style="font-weight:700;color:#2f2f2f;">Total donations received, last 12 mos.</span></div><div class="t" style="left:982.00px;top:329.30px;font-size:13px;line-height:13px;transform:scaleX(1.0640);-webkit-text-stroke:0.35px #262626;"><span style="font-weight:400;color:#262626;">220,502</span></div><div class="t" style="left:981.90px;top:345.20px;font-size:5.2px;line-height:5.2px;transform:scaleX(1.0039);"><span style="font-weight:400;color:#666;">Updated 4 weeks ago</span></div><div class="t" style="left:981.90px;top:351.60px;font-size:5.2px;line-height:5.2px;transform:scaleX(0.9600);"><span style="font-weight:400;color:#8e44ad;">13,157 donations received</span><span style="font-weight:400;color:#666;"> in Jul</span></div><div class="t" style="left:749.00px;top:404.26px;font-size:13.4px;line-height:13.4px;transform:scaleX(0.9260);"><span style="font-weight:700;color:#2e2e2e;">Cash can help drive a range of important, positive changes in people’s</span></div><div class="t" style="left:749.00px;top:421.66px;font-size:13.4px;line-height:13.4px;"><span style="font-weight:700;color:#2e2e2e;">lives.</span></div><div class="t" style="left:749.00px;top:448.39px;font-size:9.7px;line-height:9.7px;transform:scaleX(0.9765);"><span style="font-weight:400;color:#4d4d4d;">Cash transfers give recipients the flexibility to pursue the goals that matter to them. Of course, people,</span></div><div class="t" style="left:749.00px;top:463.14px;font-size:9.7px;line-height:9.7px;transform:scaleX(0.9824);"><span style="font-weight:400;color:#4d4d4d;">programs, and priorities vary so effects do too. The chart below summarizes effects from cash programs</span></div><div class="t" style="left:749.00px;top:477.89px;font-size:9.7px;line-height:9.7px;transform:scaleX(0.9729);"><span style="font-weight:400;color:#4d4d4d;">all over the world on key aspects of wellbeing.</span></div><div class="t" style="left:886.40px;top:510.41px;font-size:6.6px;line-height:6.6px;transform:scaleX(1.0630);"><span style="font-weight:700;color:#6a6a6a;">Cash transfer effects by outcome type (# of studies)</span></div><div class="t" style="left:853.50px;top:524.78px;font-size:6.4px;line-height:6.4px;transform:scaleX(1.0234);"><span style="font-weight:400;color:#8a8a8a;">Significant improvement</span></div><div class="t" style="left:942.70px;top:524.78px;font-size:6.4px;line-height:6.4px;transform:scaleX(1.0136);"><span style="font-weight:400;color:#8a8a8a;">Significant worsening</span></div><div class="t" style="left:1023.00px;top:524.78px;font-size:6.4px;line-height:6.4px;transform:scaleX(1.0238);"><span style="font-weight:400;color:#8a8a8a;">No signficant results</span></div><div class="t" style="left:846.27px;top:589.30px;font-size:6.8px;line-height:6.8px;"><span style="font-weight:400;color:#ffffff;">63</span></div><div class="t" style="left:855.46px;top:635.75px;font-size:6.8px;line-height:6.8px;"><span style="font-weight:400;color:#ffffff;">6</span></div><div class="t" style="left:861.87px;top:622.71px;font-size:6.8px;line-height:6.8px;"><span style="font-weight:400;color:#333;">22</span></div><div class="t" style="left:847.09px;top:648.71px;font-size:6.6px;line-height:6.6px;"><span style="font-weight:400;color:#333;">Monetary</span></div><div class="t" style="left:850.03px;top:656.81px;font-size:6.6px;line-height:6.6px;"><span style="font-weight:400;color:#333;">poverty</span></div><div class="t" style="left:890.67px;top:626.79px;font-size:6.8px;line-height:6.8px;"><span style="font-weight:400;color:#ffffff;">17</span></div><div class="t" style="left:900.30px;top:640.90px;font-size:5.2px;line-height:5.2px;"><span style="font-weight:400;color:#fff;">2</span></div><div class="t" style="left:906.27px;top:625.16px;font-size:6.8px;line-height:6.8px;"><span style="font-weight:400;color:#333;">19</span></div><div class="t" style="left:890.57px;top:648.71px;font-size:6.6px;line-height:6.6px;"><span style="font-weight:400;color:#333;">Education</span></div><div class="t" style="left:935.37px;top:621.90px;font-size:6.8px;line-height:6.8px;"><span style="font-weight:400;color:#ffffff;">23</span></div><div class="t" style="left:945.00px;top:640.90px;font-size:5.2px;line-height:5.2px;"><span style="font-weight:400;color:#fff;">1</span></div><div class="t" style="left:950.97px;top:615.38px;font-size:6.8px;line-height:6.8px;"><span style="font-weight:400;color:#333;">31</span></div><div class="t" style="left:937.29px;top:648.71px;font-size:6.6px;line-height:6.6px;"><span style="font-weight:400;color:#333;">Health &amp;</span></div><div class="t" style="left:938.21px;top:656.81px;font-size:6.6px;line-height:6.6px;"><span style="font-weight:400;color:#333;">nutrition</span></div><div class="t" style="left:980.37px;top:616.19px;font-size:6.8px;line-height:6.8px;"><span style="font-weight:400;color:#ffffff;">30</span></div><div class="t" style="left:990.00px;top:640.90px;font-size:5.2px;line-height:5.2px;"><span style="font-weight:400;color:#fff;">2</span></div><div class="t" style="left:995.97px;top:624.34px;font-size:6.8px;line-height:6.8px;"><span style="font-weight:400;color:#333;">20</span></div><div class="t" style="left:982.29px;top:648.71px;font-size:6.6px;line-height:6.6px;"><span style="font-weight:400;color:#333;">Savings,</span></div><div class="t" style="left:974.96px;top:656.81px;font-size:6.6px;line-height:6.6px;"><span style="font-weight:400;color:#333;">investment, &amp;</span></div><div class="t" style="left:979.54px;top:664.91px;font-size:6.6px;line-height:6.6px;"><span style="font-weight:400;color:#333;">production</span></div><div class="t" style="left:1025.37px;top:624.34px;font-size:6.8px;line-height:6.8px;"><span style="font-weight:400;color:#ffffff;">20</span></div><div class="t" style="left:1034.56px;top:635.75px;font-size:6.8px;line-height:6.8px;"><span style="font-weight:400;color:#ffffff;">6</span></div><div class="t" style="left:1040.97px;top:609.67px;font-size:6.8px;line-height:6.8px;"><span style="font-weight:400;color:#333;">38</span></div><div class="t" style="left:1021.61px;top:648.71px;font-size:6.6px;line-height:6.6px;"><span style="font-weight:400;color:#333;">Employment</span></div><div class="t" style="left:1070.07px;top:621.08px;font-size:6.8px;line-height:6.8px;"><span style="font-weight:400;color:#ffffff;">24</span></div><div class="t" style="left:1079.26px;top:636.57px;font-size:6.8px;line-height:6.8px;"><span style="font-weight:400;color:#ffffff;">5</span></div><div class="t" style="left:1085.92px;top:631.68px;font-size:6.8px;line-height:6.8px;"><span style="font-weight:400;color:#333;">11</span></div><div class="t" style="left:1063.37px;top:648.71px;font-size:6.6px;line-height:6.6px;"><span style="font-weight:400;color:#333;">Empowerment</span></div>
</body></html>
